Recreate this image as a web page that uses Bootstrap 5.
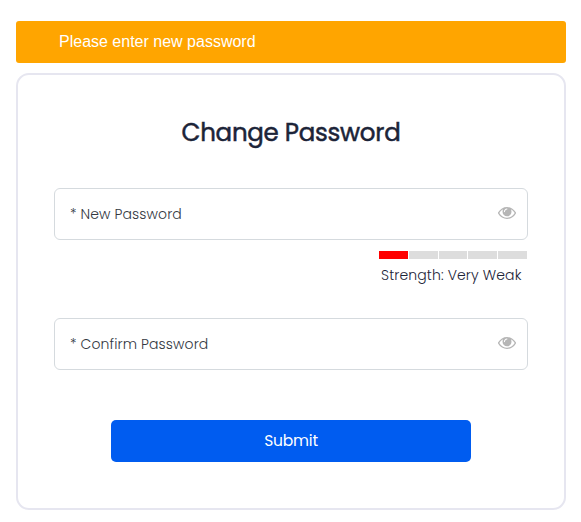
<!DOCTYPE html>
<html lang="en">
<head>
<meta charset="utf-8">
<meta name="viewport" content="width=device-width, initial-scale=1">
<title>Change Password</title>
<link href="https://cdn.jsdelivr.net/npm/bootstrap@5.3.0/dist/css/bootstrap.min.css" rel="stylesheet">
<style>
body{font-family:Poppins,Inter,sans-serif;color:#1c2438;background:#fff}
.page{width:550px;margin-left:16px;padding-top:21px}
.notice{height:42px;margin-bottom:10px;padding:0 43px;border:0;border-radius:3px;background:#ffa500;color:#fff;font:16px/42px "Liberation Sans",Arial,sans-serif}
.panel{height:437px;border:2px solid #e6e6f0;border-radius:13px;padding:42px 36px 0}
.title{font-size:24.5px;letter-spacing:-.27px;line-height:32px;font-weight:400;margin-bottom:39px;-webkit-text-stroke:.5px #1c2438}
.field{height:52px;border:1px solid #d5dade;border-radius:6px;padding:0 11px 0 15px}
.field input{font-size:14px;line-height:50px;letter-spacing:.1px;color:#33383f}
.field input::placeholder{color:#33383f;opacity:1;font-weight:300}
.eye{width:18px;height:12px;fill:#b5b5b5;margin-bottom:3px}
.strength{width:148px;margin:11px 1px 33px auto}
.meter{height:8px;gap:1px}
.meter span{background:#ddd}
.meter .lit{background:red}
.strength-label{font-size:14px;line-height:20px;margin-top:6px;padding-left:2px;white-space:nowrap;font-weight:300;letter-spacing:.13px}
.submit{width:360px;height:42px;margin-top:50px;padding:0;border:0;border-radius:5px;background:#005cf0;font-size:15.5px;letter-spacing:-.2px;line-height:42px}
</style>
</head>
<body>
<main class="page">
  <div class="alert notice" role="alert">Please enter new password</div>
  <form class="panel">
    <h1 class="title text-center">Change Password</h1>
    <div class="field d-flex align-items-center">
      <input class="form-control border-0 p-0 bg-transparent shadow-none" type="password" placeholder="* New Password" aria-label="New Password">
      <svg class="eye flex-shrink-0" viewBox="0 384 1792 1152" preserveAspectRatio="none"><path id="eye-shape" d="M1664 960q-152-236-381-353 61 104 61 225 0 185-131.5 316.5t-316.5 131.5-316.5-131.5-131.5-316.5q0-121 61-225-229 117-381 353 133 205 333.5 326.5t434.5 121.5 434.5-121.5 333.5-326.5zm-720-384q0-20-14-34t-34-14q-125 0-214.5 89.5t-89.5 214.5q0 20 14 34t34 14 34-14 14-34q0-86 61-147t147-61q20 0 34-14t14-34zm848 384q0 34-20 69-140 230-376.5 368.5t-499.5 138.5-499.5-139-376.5-368q-20-35-20-69t20-69q140-229 376.5-368t499.5-139 499.5 139 376.5 368q20 35 20 69z"/></svg>
    </div>
    <div class="strength">
      <div class="meter d-flex"><span class="lit flex-fill"></span><span class="flex-fill"></span><span class="flex-fill"></span><span class="flex-fill"></span><span class="flex-fill"></span></div>
      <div class="strength-label">Strength: Very Weak</div>
    </div>
    <div class="field d-flex align-items-center">
      <input class="form-control border-0 p-0 bg-transparent shadow-none" type="password" placeholder="* Confirm Password" aria-label="Confirm Password">
      <svg class="eye flex-shrink-0" viewBox="0 384 1792 1152" preserveAspectRatio="none"><use href="#eye-shape"/></svg>
    </div>
    <button class="btn btn-primary submit d-block mx-auto" type="button">Submit</button>
  </form>
</main>
<script src="https://cdn.jsdelivr.net/npm/bootstrap@5.3.0/dist/js/bootstrap.bundle.min.js"></script>
</body>
</html>
